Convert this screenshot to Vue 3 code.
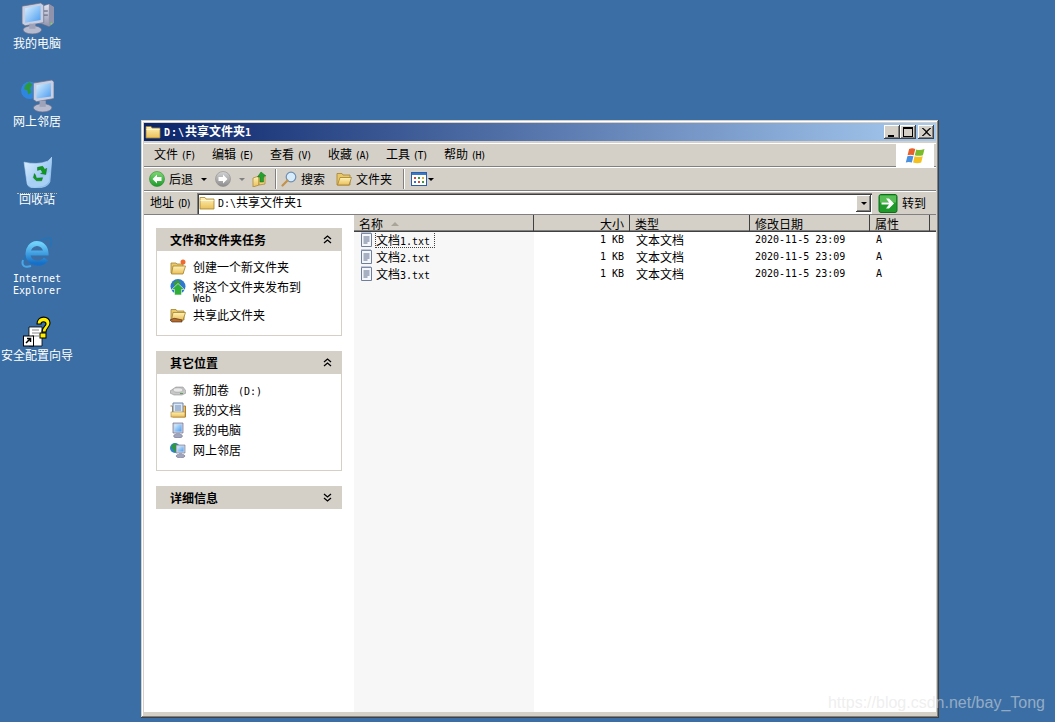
<template>
  <div class="desk">
    <svg class="defs" width="0" height="0">
      <defs>
        <linearGradient id="gScreen" x1="0" y1="0" x2="1" y2="1">
          <stop offset="0" stop-color="#d8f0ff" />
          <stop offset="1" stop-color="#4a9cf0" />
        </linearGradient>
        <linearGradient id="gCase" x1="0" y1="0" x2="0" y2="1">
          <stop offset="0" stop-color="#e4e6f0" />
          <stop offset="1" stop-color="#8f93ac" />
        </linearGradient>
        <linearGradient id="gFolder" x1="0" y1="0" x2="0" y2="1">
          <stop offset="0" stop-color="#fff3b8" />
          <stop offset="1" stop-color="#eabf5a" />
        </linearGradient>
        <linearGradient id="gGreen" x1="0" y1="0" x2="0" y2="1">
          <stop offset="0" stop-color="#7fd873" />
          <stop offset="1" stop-color="#1c9a2a" />
        </linearGradient>
        <linearGradient id="gGray" x1="0" y1="0" x2="0" y2="1">
          <stop offset="0" stop-color="#d4d4d4" />
          <stop offset="1" stop-color="#8c8c8c" />
        </linearGradient>
        <linearGradient id="gBin" x1="0" y1="0" x2="1" y2="1">
          <stop offset="0" stop-color="#e2f1ff" />
          <stop offset="1" stop-color="#72b2ec" />
        </linearGradient>
        <linearGradient id="gIe" x1="0" y1="0" x2="0" y2="1">
          <stop offset="0" stop-color="#6fd0fa" />
          <stop offset="1" stop-color="#1470c8" />
        </linearGradient>
        <symbol id="i-computer" viewBox="0 0 32 32">
          <path d="M17 5l10-3 5 3v15l-5 4-10-4z" fill="url(#gCase)" stroke="#63677f" stroke-width=".6" />
          <path d="M27 2l5 3v15l-5 4z" fill="#8f93ac" />
          <rect x="22" y="8" width="4" height="1.500" fill="#7b7f97" />
          <rect x="22" y="12" width="4" height="1.500" fill="#7b7f97" />
          <circle cx="29.500" cy="21" r=".9" fill="#6fdc4a" />
          <path d="M1 4l18-3 3 2v17l-18 3-3-2z" fill="#c9cfe2" stroke="#6a6f8a" stroke-width=".7" />
          <path d="M4 6l15-2.500v14L4 20z" fill="url(#gScreen)" />
          <ellipse cx="11" cy="27" rx="9" ry="4" fill="#b7bbd0" stroke="#6a6f8a" stroke-width=".7" />
          <rect x="8" y="21" width="6" height="5" fill="#9fa3ba" />
        </symbol>
        <symbol id="i-network" viewBox="0 0 32 33">
          <circle cx="8.500" cy="11" r="8.500" fill="#2f86e0" />
          <path d="M4 6l4-3 3 2-2 4 1 4-3 2-1-4-3-1z" fill="#2c9a3c" />
          <path d="M12 4l18-3 2 2v16l-17 3-3-2z" fill="#c9cfe2" stroke="#6a6f8a" stroke-width=".7" />
          <path d="M15 6l14-2v13l-14 2z" fill="url(#gScreen)" />
          <ellipse cx="21" cy="28" rx="9" ry="4" fill="#b7bbd0" stroke="#6a6f8a" stroke-width=".7" />
          <rect x="18" y="21" width="6" height="6" fill="#9fa3ba" />
        </symbol>
        <symbol id="i-bin" viewBox="0 0 28 30">
          <path d="M1 5Q14 8 24 4L28 0 26 24Q24 30 12 30 5 30 4 26z" fill="url(#gBin)" stroke="#b8d8f8" stroke-width=".6" />
          <path d="M4 26Q16 24 26 14L25 24Q22 29 12 29 6 29 4 26z" fill="#a8d0f4" />
          <path d="M14 10l5-1 2 3 2-1-1 6-5-1 2-1-2-3-3 1zM11 16l-1 4 3 3h5l1-3-6 .5-1-3z" fill="#0f9a1f" stroke="#05600f" stroke-width=".4" />
        </symbol>
        <symbol id="i-ie" viewBox="0 0 32 32">
          <path d="M3 25C6 12 20 2 28 2c3 0 3 4 1 9" fill="none" stroke="#2474b8" stroke-width="1.500" />
          <path d="M10 30C4 32 0 30 2 24" fill="none" stroke="#4aa8e8" stroke-width="2" />
          <path d="M8 17h17a9 10 0 0 0-18 1c0 10 13 12 18 5" fill="none" stroke="url(#gIe)" stroke-width="5" />
        </symbol>
        <symbol id="i-wizard" viewBox="0 0 28 31">
          <path d="M6 11h13v19H6z" fill="#fff" stroke="#000" stroke-width=".8" />
          <path d="M9 14h7M9 17h7M9 20h7" stroke="#888" />
          <path d="M14 8c0-9 13-9 13-1 0 4-4 5-4 9h-4c0-5 4-6 4-8 0-3-5-3-5 0z" fill="#ffee00" stroke="#000" stroke-width="1.100" />
          <rect x="17" y="17" width="6" height="5" fill="#ffee00" stroke="#000" />
          <rect x=".5" y="20" width="10" height="10" fill="#fff" stroke="#000" />
          <path d="M3 27l4-4M4 22.500h3.500V26" fill="none" stroke="#000" stroke-width="1.500" />
        </symbol>
        <symbol id="i-folder" viewBox="0 0 16 16">
          <path d="M1 2.500h5l1 1.500h8v10H1z" fill="url(#gFolder)" stroke="#a5812c" stroke-width=".8" />
          <path d="M1.500 5.500h13" stroke="#fff8d8" />
        </symbol>
        <symbol id="i-opening" viewBox="0 0 16 16">
          <path d="M1 2.500h5l1 1.500h7v10H1z" fill="#e8c868" stroke="#a5812c" stroke-width=".8" />
          <path d="M4 6.500h11.500L13 14H1.500z" fill="url(#gFolder)" stroke="#a5812c" stroke-width=".8" />
        </symbol>
        <symbol id="i-back" viewBox="0 0 16 16">
          <circle cx="8" cy="8" r="7.500" fill="url(#gGreen)" stroke="#2d8a30" stroke-width=".6" />
          <path d="M8 3.500L3.500 8 8 12.500V10h4.500V6H8z" fill="#fff" />
        </symbol>
        <symbol id="i-forward" viewBox="0 0 16 16">
          <circle cx="8" cy="8" r="7.500" fill="url(#gGray)" stroke="#8c8c8c" stroke-width=".6" />
          <path d="M8 3.500L12.500 8 8 12.500V10H3.500V6H8z" fill="#fff" />
        </symbol>
        <symbol id="i-up" viewBox="0 0 16 16">
          <path d="M1 7l6-2v9l-6 2z" fill="url(#gFolder)" stroke="#a5812c" stroke-width=".7" />
          <path d="M7 5l6 1v7l-6 1z" fill="#f1cf72" stroke="#a5812c" stroke-width=".7" />
          <path d="M9 1l5 4-2.500.3V11H8V6H5.500z" fill="#25a02c" stroke="#10701a" stroke-width=".5" />
        </symbol>
        <symbol id="i-search" viewBox="0 0 16 16">
          <circle cx="10" cy="6" r="4.800" fill="#d7ecfb" stroke="#6e8fb0" stroke-width="1.200" />
          <path d="M6.500 9.500L1.500 14.500" stroke="#c4924a" stroke-width="2.200" stroke-linecap="round" />
        </symbol>
        <symbol id="i-views" viewBox="0 0 16 16">
          <rect x=".5" y="1.500" width="15" height="13" fill="#fff" stroke="#2a5fa8" />
          <rect x="1" y="2" width="14" height="2" fill="#3b78c8" />
          <rect x="3" y="6" width="2" height="2" fill="#d04a3a" />
          <rect x="7" y="6" width="2" height="2" fill="#3a9a3a" />
          <rect x="11" y="6" width="2" height="2" fill="#e0b030" />
          <rect x="3" y="10" width="2" height="2" fill="#3a70c8" />
          <rect x="7" y="10" width="2" height="2" fill="#d04a3a" />
          <rect x="11" y="10" width="2" height="2" fill="#3a9a3a" />
        </symbol>
        <symbol id="i-go" viewBox="0 0 19 19">
          <rect x=".5" y=".5" width="18" height="18" rx="2" fill="#1f9a2a" stroke="#0f6e1a" />
          <rect x="1.500" y="1.500" width="16" height="7" fill="#57bd55" />
          <path d="M3 8.500h7.500L7.500 4.500h3l5 5-5 5h-3l3-4H3z" fill="#fff" />
        </symbol>
        <symbol id="i-logo" viewBox="0 0 19.500 16.500">
          <path d="M4 2Q7 .5 10 2L8.500 8Q5.500 7 2.500 8z" fill="#e8602c" />
          <path d="M11 2.300Q14 3.500 19 2L17.500 8Q13 9 9.500 8z" fill="#7cbb2c" />
          <path d="M2.300 9Q5 8 8.200 9L6.700 15Q3.500 14 .8 15z" fill="#4a90e0" />
          <path d="M9.300 9Q13 10 17.300 9L15.800 15Q12 16.500 7.900 15z" fill="#f4c020" />
        </symbol>
        <symbol id="i-txt" viewBox="0 0 16 16">
          <path d="M2.500 1.500h10v13h-10z" fill="#f4f7fc" stroke="#6f7f9a" />
          <path d="M2.500 1h10" stroke="#8a9ab8" stroke-width="2" stroke-dasharray="1 1" />
          <path d="M4.500 5h6M4.500 7h6M4.500 9h6M4.500 11h4" stroke="#5a6a88" />
        </symbol>
        <symbol id="i-newfolder" viewBox="0 0 16 16">
          <path d="M1 4h5l1 1h6v9H1z" fill="#e8c868" stroke="#a5812c" stroke-width=".8" />
          <path d="M3 7h12.500L13 15H1.500z" fill="url(#gFolder)" stroke="#a5812c" stroke-width=".8" />
          <circle cx="13" cy="3" r="2.500" fill="#f06a30" />
        </symbol>
        <symbol id="i-publish" viewBox="0 0 16 16">
          <circle cx="8" cy="7.500" r="7.500" fill="#2f78d0" />
          <path d="M3 4l4-3 4 2-2 3-4 1z" fill="#3a9a3c" />
          <path d="M8 4.500l6.500 6h-3V16h-7v-5.500h-3z" fill="#2fae38" stroke="#fff" stroke-width=".6" />
        </symbol>
        <symbol id="i-share" viewBox="0 0 16 16">
          <path d="M1 2.500h5l1 1.500h7v9H1z" fill="#e8c868" stroke="#a5812c" stroke-width=".8" />
          <path d="M3 5.500h12.500L13 13H1.500z" fill="url(#gFolder)" stroke="#a5812c" stroke-width=".8" />
          <path d="M0 13q4-3 8-1l4 1v2H2z" fill="#b86a2a" stroke="#3a2a20" stroke-width=".6" />
        </symbol>
        <symbol id="i-drive" viewBox="0 0 16 16">
          <path d="M0 9l6-4h7l3 4v2l-4 2H4l-4-2z" fill="#c8c8c8" stroke="#808080" stroke-width=".5" />
          <ellipse cx="8" cy="8" rx="5" ry="2.200" fill="#e8e8e8" stroke="#909090" stroke-width=".5" />
          <rect x="10" y="11" width="3" height="1" fill="#60a060" />
        </symbol>
        <symbol id="i-docs" viewBox="0 0 16 16">
          <path d="M.5 4h2v11h13V4h-2" fill="#f0c060" stroke="#b08030" />
          <path d="M3 1h10v11H3z" fill="#dbe8f6" stroke="#6f86a8" />
          <path d="M5 4h6M5 6h6M5 8h6" stroke="#6a8ab8" />
          <rect x="1" y="10" width="14" height="5" fill="url(#gFolder)" stroke="#b08030" stroke-width=".6" />
        </symbol>
        <symbol id="i-pc" viewBox="0 0 16 16">
          <path d="M3 1h10v10H3z" fill="#c9cfe2" stroke="#6a6f8a" stroke-width=".7" />
          <path d="M4.500 2.500h7v7h-7z" fill="url(#gScreen)" />
          <ellipse cx="8" cy="14" rx="4.500" ry="2" fill="#a0a4bc" stroke="#6a6f8a" stroke-width=".5" />
          <rect x="6" y="11" width="4" height="2" fill="#9fa3ba" />
        </symbol>
        <symbol id="i-net" viewBox="0 0 16 16">
          <circle cx="5" cy="6" r="5" fill="#2f80d8" />
          <path d="M2 3l3-2 3 2-2 3 1 3-3 1-1-3-2-1z" fill="#2c9a3c" />
          <path d="M6 3h9v8H6z" fill="#c9cfe2" stroke="#6a6f8a" stroke-width=".6" />
          <path d="M7.500 4.500h6v5h-6z" fill="url(#gScreen)" />
          <ellipse cx="10.500" cy="14" rx="4.500" ry="1.800" fill="#a0a4bc" stroke="#6a6f8a" stroke-width=".5" />
          <rect x="9" y="11" width="3" height="2" fill="#9fa3ba" />
        </symbol>
      </defs>
    </svg>

    <div
      v-for="d in desktopIcons"
      :key="d.id"
      class="desk-icon"
      :style="{ left: d.x + 'px', top: d.y + 'px', width: d.w + 'px' }"
    >
      <svg class="desk-glyph" :style="{ width: d.iw + 'px', height: d.ih + 'px' }">
        <use :href="'#' + d.id" />
      </svg>
      <div v-if="d.focus" class="desk-focus"></div>
      <div v-if="d.cn" class="desk-label" :style="{ marginTop: d.gap + 'px' }">{{ d.cn }}</div>
      <template v-else>
        <div class="desk-latin first">Internet</div>
        <div class="desk-latin">Explorer</div>
      </template>
    </div>

    <section class="window">
      <header class="titlebar">
        <svg class="ico16"><use href="#i-folder" /></svg>
        <span class="title-text"><span class="lat">D:\</span>共享文件夹<span class="lat">1</span></span>
        <div class="caption-btns">
          <button class="cap"><span class="cap-min"></span></button>
          <button class="cap"><span class="cap-max"></span></button>
          <button class="cap close">
            <svg width="9" height="8" viewBox="0 0 9 8"><path d="M1 0l3.500 3L8 0h1L5 4l4 4H8L4.500 5 1 8H0l4-4-4-4z" fill="#000" stroke="#000" stroke-width=".5" /></svg>
          </button>
        </div>
      </header>

      <div class="band menubar">
        <nav class="menu-items">
          <span v-for="m in menus" :key="m.k" class="menu-item">{{ m.t }} <span class="lat">({{ m.k }})</span></span>
        </nav>
        <div class="logo"><svg width="20" height="17"><use href="#i-logo" /></svg></div>
      </div>

      <div class="band toolbar">
        <svg class="ico16"><use href="#i-back" /></svg>
        <span class="tb-text">后退</span>
        <span class="caret tb-c1"></span>
        <svg class="ico16 tb-fwd"><use href="#i-forward" /></svg>
        <span class="caret gray tb-c2"></span>
        <svg class="ico16 tb-up"><use href="#i-up" /></svg>
        <span class="sep"></span>
        <svg class="ico16 tb-search"><use href="#i-search" /></svg>
        <span class="tb-text">搜索</span>
        <svg class="ico16 tb-folder"><use href="#i-opening" /></svg>
        <span class="tb-text">文件夹</span>
        <span class="sep tb-sep2"></span>
        <svg class="ico16 tb-views"><use href="#i-views" /></svg>
        <span class="caret tb-c3"></span>
      </div>

      <div class="band addressbar">
        <span class="addr-label">地址 <span class="lat">(D)</span></span>
        <div class="addr-input">
          <svg class="ico16"><use href="#i-folder" /></svg>
          <span class="addr-text"><span class="lat">D:\</span>共享文件夹<span class="lat">1</span></span>
          <span class="addr-drop"><span class="caret"></span></span>
        </div>
        <svg class="go-ico"><use href="#i-go" /></svg>
        <span class="go-text">转到</span>
      </div>

      <main class="content">
        <aside class="tasks">
          <div v-for="p in panels" :key="p.title" class="panel">
            <div class="panel-head">
              <span>{{ p.title }}</span>
              <svg width="9" height="9" viewBox="0 0 9 9">
                <path :d="p.open ? 'M1 4l3.500-3L8 4M1 8l3.500-3L8 8' : 'M1 1l3.500 3L8 1M1 5l3.500 3L8 5'" fill="none" stroke="#000" stroke-width="1.300" />
              </svg>
            </div>
            <div v-if="p.items.length" class="panel-body">
              <div v-for="it in p.items" :key="it.t" class="task">
                <svg class="ico16"><use :href="'#' + it.i" /></svg>
                <div class="task-text">
                  <div class="task-line">
                    {{ it.t }}<span v-if="it.drive" class="lat drive">{{ it.drive }}</span>
                  </div>
                  <div v-if="it.sub" class="lat sub">{{ it.sub }}</div>
                </div>
              </div>
            </div>
          </div>
        </aside>

        <div class="files">
          <div class="sort-col"></div>
          <div class="list-head">
            <div v-for="c in columns" :key="c.t" class="head-cell" :class="c.cls">
              {{ c.t }}<span v-if="c.sort" class="sort-tri"></span>
            </div>
            <div class="head-cell last"></div>
          </div>
          <div v-for="(f, i) in files" :key="f" class="row">
            <div class="cell c-name">
              <svg class="ico16"><use href="#i-txt" /></svg>
              <span class="fname" :class="{ focused: i === 0 }">文档<span class="lat">{{ f }}</span></span>
            </div>
            <div class="cell c-size lat">1 KB</div>
            <div class="cell c-type">文本文档</div>
            <div class="cell c-date lat">2020-11-5 23:09</div>
            <div class="cell c-attr lat">A</div>
          </div>
        </div>
      </main>
    </section>

    <div class="watermark">https://blog.csdn.net/bay_Tong</div>
  </div>
</template>

<script setup>
const desktopIcons = [
  { id: 'i-computer', x: 0, y: 2, w: 74, iw: 33, ih: 33, cn: '我的电脑', gap: 0 },
  { id: 'i-network', x: 0, y: 79, w: 74, iw: 33, ih: 34, cn: '网上邻居', gap: 0 },
  { id: 'i-bin', x: 0, y: 157, w: 74, iw: 29, ih: 31, cn: '回收站', focus: true, gap: -3 },
  { id: 'i-ie', x: 0, y: 236, w: 74, iw: 32, ih: 32 },
  { id: 'i-wizard', x: 0, y: 316, w: 74, iw: 28, ih: 31, cn: '安全配置向导', gap: 0 },
]

const menus = [
  { t: '文件', k: 'F' },
  { t: '编辑', k: 'E' },
  { t: '查看', k: 'V' },
  { t: '收藏', k: 'A' },
  { t: '工具', k: 'T' },
  { t: '帮助', k: 'H' },
]

const panels = [
  {
    title: '文件和文件夹任务',
    open: true,
    items: [
      { i: 'i-newfolder', t: '创建一个新文件夹' },
      { i: 'i-publish', t: '将这个文件夹发布到', sub: 'Web' },
      { i: 'i-share', t: '共享此文件夹' },
    ],
  },
  {
    title: '其它位置',
    open: true,
    items: [
      { i: 'i-drive', t: '新加卷', drive: '(D:)' },
      { i: 'i-docs', t: '我的文档' },
      { i: 'i-pc', t: '我的电脑' },
      { i: 'i-net', t: '网上邻居' },
    ],
  },
  { title: '详细信息', open: false, items: [] },
]

const columns = [
  { t: '名称', cls: 'h-name', sort: true },
  { t: '大小', cls: 'h-size' },
  { t: '类型', cls: 'h-type' },
  { t: '修改日期', cls: 'h-date' },
  { t: '属性', cls: 'h-attr' },
]

const files = ['1.txt', '2.txt', '3.txt']
</script>

<style>
html, body {
  margin: 0;
  background: #3a6ea5;
}
</style>

<style scoped>
.desk {
  position: relative;
  width: 1055px;
  height: 722px;
  overflow: hidden;
  background: #3a6ea5;
  font-family: "Noto Sans CJK SC", "Liberation Sans", sans-serif;
  font-size: 12px;
  line-height: 14px;
  color: #000;
}
.defs {
  position: absolute;
}
.lat {
  font-family: "DejaVu Sans Mono", "Liberation Mono", monospace;
  font-size: 10px;
}

/* desktop icons */
.desk-icon {
  position: absolute;
  display: flex;
  flex-direction: column;
  align-items: center;
  color: #fff;
}
.desk-glyph {
  display: block;
}
.desk-focus {
  width: 40px;
  margin-top: 5px;
  border-top: 1px dotted #c8c0a0;
}
.desk-label {
  height: 16px;
  line-height: 16px;
  white-space: nowrap;
}
.desk-latin {
  font-family: "DejaVu Sans Mono", monospace;
  font-size: 10px;
  line-height: 12px;
}
.desk-latin.first {
  margin-top: 5px;
}

/* window frame */
.window {
  position: absolute;
  left: 141px;
  top: 120px;
  width: 798px;
  height: 598px;
  box-sizing: border-box;
  padding: 3px 3px 6px;
  display: flex;
  flex-direction: column;
  background: #d4d0c8;
  box-shadow: inset -1px -1px 0 #404040, inset 1px 1px 0 #d4d0c8, inset -2px -2px 0 #808080, inset 2px 2px 0 #fff;
}
.titlebar {
  height: 18px;
  flex: none;
  display: flex;
  align-items: center;
  gap: 4px;
  padding-left: 1px;
  background: linear-gradient(90deg, #0a246a, #a6caf0);
  color: #fff;
  font-weight: 700;
}
.title-text {
  margin-left: -1px;
}
.title-text .lat {
  font-weight: 700;
  letter-spacing: 1px;
}
.ico16 {
  width: 16px;
  height: 16px;
  flex: none;
}
.caption-btns {
  margin-left: auto;
  margin-right: 2px;
  display: flex;
}
.cap {
  width: 16px;
  height: 14px;
  padding: 0;
  border: none;
  display: flex;
  align-items: center;
  justify-content: center;
  background: #d4d0c8;
  box-shadow: inset -1px -1px 0 #404040, inset 1px 1px 0 #fff, inset -2px -2px 0 #808080;
}
.cap.close {
  margin-left: 2px;
}
.cap-min {
  width: 6px;
  height: 2px;
  margin: 7px 3px 0 0;
  background: #000;
}
.cap-max {
  width: 8px;
  height: 7px;
  border: 1px solid #000;
  border-top-width: 2px;
}

/* bars */
.band {
  flex: none;
  display: flex;
  align-items: center;
  box-sizing: border-box;
  box-shadow: inset 0 1px 0 #fff, inset 0 -1px 0 #808080;
}
.menubar {
  margin-top: 2px;
  height: 24px;
  padding-left: 4px;
}
.menu-items {
  display: flex;
  flex: 1;
}
.menu-item {
  width: 58px;
  padding-left: 6px;
  box-sizing: border-box;
  white-space: nowrap;
}
.menu-item .lat {
  letter-spacing: -1.200px;
}
.logo {
  width: 38px;
  height: 23px;
  margin-right: 2px;
  background: #fff;
  display: flex;
  align-items: center;
  justify-content: center;
}
.toolbar {
  height: 24px;
  padding-left: 5px;
}
.tb-text {
  margin-left: 4px;
}
.caret {
  display: inline-block;
  width: 0;
  height: 0;
  border-left: 3px solid transparent;
  border-right: 3px solid transparent;
  border-top: 3px solid #000;
}
.caret.gray {
  border-top-color: #808080;
}
.tb-c1 {
  margin-left: 8px;
}
.tb-fwd {
  margin-left: 8px;
}
.tb-c2 {
  margin-left: 8px;
}
.tb-up {
  margin-left: 7px;
}
.sep {
  width: 1px;
  height: 20px;
  margin-left: 7px;
  background: #808080;
  box-shadow: 1px 0 0 #fff;
}
.tb-search {
  margin-left: 5px;
}
.tb-folder {
  margin-left: 11px;
}
.tb-sep2 {
  margin-left: 11px;
}
.tb-views {
  margin-left: 7px;
}
.tb-c3 {
  margin-left: 1px;
}
.addressbar {
  height: 24px;
  padding-left: 6px;
}
.addr-label {
  width: 47px;
  white-space: nowrap;
}
.addr-label .lat {
  letter-spacing: -1.500px;
}
.addr-input {
  width: 675px;
  height: 21px;
  box-sizing: border-box;
  display: flex;
  align-items: center;
  gap: 3px;
  padding-left: 2px;
  background: #fff;
  box-shadow: inset 1px 1px 0 #808080, inset 2px 2px 0 #404040, inset -1px -1px 0 #fff;
}
.addr-drop {
  margin-left: auto;
  margin-right: 1px;
  width: 15px;
  height: 17px;
  display: flex;
  align-items: center;
  justify-content: center;
  background: #d4d0c8;
  box-shadow: inset -1px -1px 0 #404040, inset 1px 1px 0 #fff, inset -2px -2px 0 #808080;
}
.go-ico {
  width: 20px;
  height: 19px;
  margin-left: 6px;
  flex: none;
}
.go-text {
  margin-left: 4px;
}

/* content */
.content {
  flex: 1;
  min-height: 0;
  display: flex;
  background: #fff;
}
.tasks {
  width: 210px;
  flex: none;
  box-sizing: border-box;
  padding: 13px 12px 0;
  display: flex;
  flex-direction: column;
  gap: 15px;
}
.panel-head {
  height: 23px;
  display: flex;
  align-items: center;
  justify-content: space-between;
  padding: 0 10px 0 14px;
  background: #d4d0c8;
  font-weight: 700;
}
.panel-body {
  border: 1px solid #d4d0c8;
  border-top: none;
  padding: 6px 0 10px 13px;
  display: flex;
  flex-direction: column;
}
.task {
  display: flex;
  gap: 7px;
  padding: 2px 0;
}
.task-text {
  padding-top: 1px;
}
.task-line {
  height: 14px;
  white-space: nowrap;
}
.drive {
  margin-left: 9px;
}
.sub {
  line-height: 9px;
}

.files {
  flex: 1;
  position: relative;
  background: #fff;
}
.sort-col {
  position: absolute;
  left: 0;
  top: 0;
  bottom: 0;
  width: 180px;
  background: #f7f7f7;
}
.list-head {
  position: relative;
  height: 17px;
  display: flex;
  background: #d4d0c8;
  box-shadow: inset 0 -1px 0 #404040, inset 0 -2px 0 #808080;
}
.head-cell {
  box-sizing: border-box;
  height: 17px;
  line-height: 17px;
  padding-left: 5px;
  border-right: 1px solid #404040;
}
.h-name {
  width: 180px;
  display: flex;
  align-items: center;
}
.sort-tri {
  width: 0;
  height: 0;
  margin-left: 8px;
  border-left: 4px solid transparent;
  border-right: 4px solid transparent;
  border-bottom: 4px solid #a8a498;
}
.h-size {
  width: 96px;
  text-align: right;
  padding-right: 5px;
}
.h-type {
  width: 120px;
}
.h-date {
  width: 120px;
}
.h-attr {
  width: 60px;
}
.head-cell.last {
  flex: 1;
  border-right: none;
}
.row {
  position: relative;
  height: 17px;
  box-sizing: border-box;
  padding-bottom: 2px;
  display: flex;
  align-items: center;
}
.cell {
  box-sizing: border-box;
  padding-left: 6px;
  white-space: nowrap;
}
.c-name {
  width: 180px;
  padding-left: 5px;
  display: flex;
  align-items: center;
}
.fname {
  padding-right: 4px;
  height: 15px;
  line-height: 15px;
  border: 1px dotted transparent;
}
.fname.focused {
  border-color: #404040;
}
.c-size {
  width: 96px;
  text-align: right;
  padding-right: 6px;
}
.c-type {
  width: 120px;
}
.c-date {
  width: 120px;
  padding-left: 5px;
}
.c-attr {
  width: 60px;
}

.watermark {
  position: absolute;
  right: 10px;
  top: 694px;
  font-family: "Liberation Sans", sans-serif;
  font-size: 16px;
  line-height: 18px;
  color: rgba(225, 225, 225, 0.55);
}
</style>
